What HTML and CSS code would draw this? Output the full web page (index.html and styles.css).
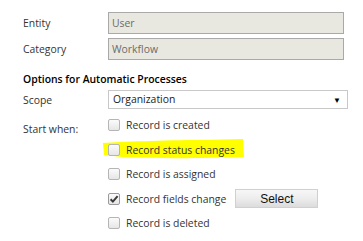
FILE: index.html
```html
<!DOCTYPE html>
<html>
<head>
<meta charset="utf-8">
<link rel="stylesheet" href="styles.css">
</head>
<body>
<div class="page">
  <div class="row r-entity">
    <div class="label">Entity</div>
    <div class="input">User</div>
  </div>
  <div class="row r-cat">
    <div class="label">Category</div>
    <div class="input">Workflow</div>
  </div>
  <div class="heading">Options for Automatic Processes</div>
  <div class="row r-scope">
    <div class="label">Scope</div>
    <div class="select"><span>Organization</span><span class="arrow">&#9660;</span></div>
  </div>
  <div class="row r-start">
    <div class="label start-label">Start when:</div>
    <div class="checks">
      <div class="check"><span class="box"></span><span>Record is created</span></div>
      <div class="check"><span class="box"></span><span>Record status changes</span></div>
      <div class="check"><span class="box"></span><span>Record is assigned</span></div>
      <div class="check"><span class="box checked"><svg viewBox="0 0 12 12" width="12" height="12"><path d="M2.6 6.2 L4.9 8.6 L9.6 3.2" fill="none" stroke="#3a3a3a" stroke-width="2"/></svg></span><span>Record fields change</span><span class="btn">Select</span></div>
      <div class="check"><span class="box"></span><span>Record is deleted</span></div>
    </div>
  </div>
</div>
<svg class="highlight" width="145" height="24" viewBox="0 0 145 24"><path d="M1 6 C20 5 60 3 100 3 L141 2 L142 20 C110 21 60 22 20 20 L2 18 Z" fill="#ffff00"/></svg>
</body>
</html>
```
FILE: styles.css
```css
html, body { margin: 0; padding: 0; background: #fff; }
body {
  font-family: "Open Sans", "Noto Sans", sans-serif;
  font-size: 10.4px;
  color: #333;
  width: 363px;
  height: 241px;
  overflow: hidden;
  position: relative;
}
.page { padding: 12px 0 0 23px; position: relative; z-index: 1; }
.row { display: flex; align-items: center; }
.label { width: 85px; flex: none; line-height: 16px; }
.input {
  box-sizing: border-box;
  width: 236px;
  height: 22px;
  background: #e8e8e0;
  border: 1px solid #a9a9a9;
  color: #6b6b6b;
  line-height: 20px;
  padding-left: 3px;
}
.r-cat { margin-top: 4px; }
.heading {
  margin-top: 11px;
  font-weight: 600;
  color: #000;
  line-height: 16px;
}
.r-scope { margin-top: 3px; }
.select {
  box-sizing: border-box;
  width: 240px;
  height: 19px;
  border: 1px solid #c8c8c8;
  background: #fff;
  color: #222;
  display: flex;
  align-items: center;
  justify-content: space-between;
  padding: 0 6px 0 4px;
  line-height: 17px;
}
.arrow { font-size: 8px; color: #000; }
.r-start { margin-top: 4px; align-items: flex-start; }
.start-label { padding-top: 8px; }
.checks { display: flex; flex-direction: column; }
.check { display: flex; align-items: center; height: 24.5px; color: #333; }
.box {
  box-sizing: border-box;
  width: 12px;
  height: 12px;
  border: 1px solid #b5b5b5;
  border-radius: 2px;
  background: linear-gradient(#fbfbfb, #e6e6e6);
  margin-right: 6px;
  display: flex;
  flex: none;
}
.box.checked { border-color: #9a9a9a; }
.box svg { display: block; margin: -1px; }
.btn {
  box-sizing: border-box;
  margin-left: 9px;
  width: 83px;
  height: 19px;
  border: 1px solid #d0d0d0;
  background: linear-gradient(#f7f7f7 0%, #ededed 50%, #dcdcdc 100%);
  font-family: "Liberation Sans", Arial, sans-serif;
  font-size: 12px;
  color: #111;
  display: flex;
  align-items: center;
  justify-content: center;
}
.highlight { position: absolute; left: 102px; top: 137px; z-index: 0; }
```
